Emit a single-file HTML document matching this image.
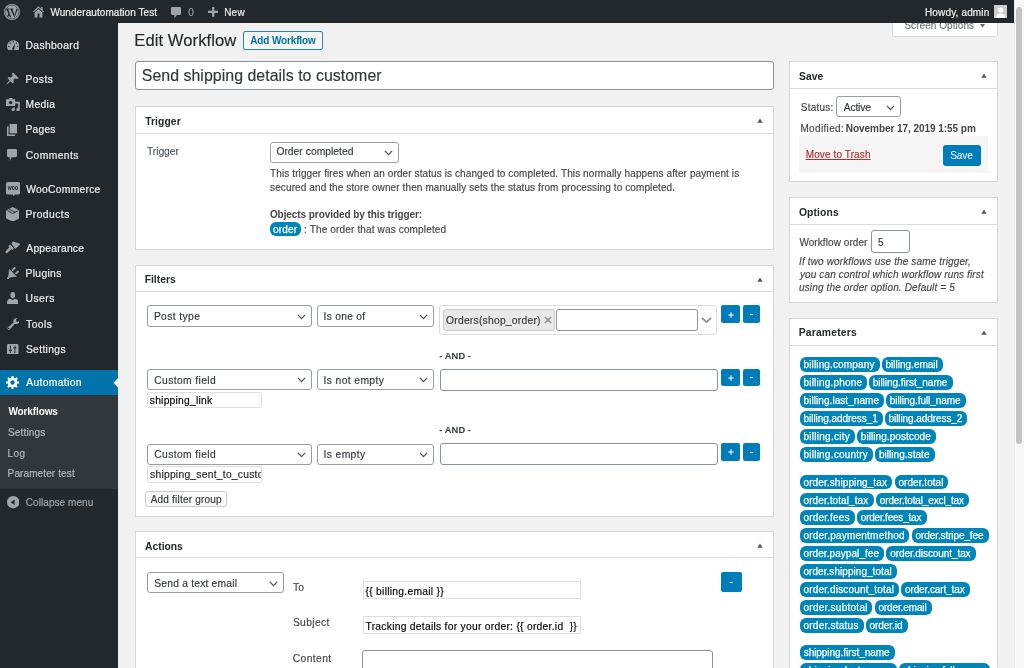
<!DOCTYPE html>
<html><head><meta charset="utf-8">
<style>
*{box-sizing:border-box;margin:0;padding:0}
html,body{width:1024px;height:668px;overflow:hidden;background:#f1f1f1;font-family:"Liberation Sans",sans-serif;color:#444;}
.a{position:absolute}
.t{position:absolute;line-height:1;white-space:nowrap}
#root{position:absolute;left:0;top:0;width:1024px;height:668px;will-change:transform}
.tag{position:absolute;height:14.8px;background:#0085ba;color:#fff;border-radius:6px;font-size:10.1px;line-height:16.2px;padding-left:4px;white-space:nowrap}
svg{position:absolute}
</style></head><body><div id="root">

<div class="a" style="left:892.00px;top:10.00px;width:106.00px;height:27.00px;background:#fff;border:1px solid #d5d8db;border-radius:0 0 3px 3px"></div>
<div class="t" style="left:904.40px;top:21.13px;font-size:10.00px;color:#72777c;letter-spacing:0.052px;-webkit-text-stroke:0.15px #72777c;">Screen Options</div>
<svg width="5" height="3.5" viewBox="0 0 5 3.5" style="left:980.2px;top:24.3px"><path d="M0 0 H5 L2.5 3.5 Z" fill="#666"/></svg>
<div class="a" style="left:0.00px;top:0.00px;width:1014.00px;height:23.40px;background:#23282d"></div>
<div class="t" style="left:50.40px;top:8.24px;font-size:10.00px;color:#eee;letter-spacing:0.072px;-webkit-text-stroke:0.2px #eee;">Wunderautomation Test</div>
<div class="t" style="left:188.30px;top:8.24px;font-size:10.00px;color:#a0a5aa;-webkit-text-stroke:0.15px #a0a5aa;">0</div>
<div class="t" style="left:224.20px;top:8.24px;font-size:10.00px;color:#eee;letter-spacing:0.208px;-webkit-text-stroke:0.2px #eee;">New</div>
<div class="t" style="left:925.00px;top:8.04px;font-size:10.00px;color:#eee;letter-spacing:0.149px;-webkit-text-stroke:0.2px #eee;">Howdy, admin</div>
<div class="a" style="left:0.00px;top:23.40px;width:118.00px;height:645.00px;background:#23282d"></div>
<div class="t" style="left:25.48px;top:40.78px;font-size:10.30px;color:#eee;letter-spacing:0.377px;-webkit-text-stroke:0.2px #eee;">Dashboard</div>
<div class="t" style="left:25.48px;top:74.88px;font-size:10.30px;color:#eee;letter-spacing:0.393px;-webkit-text-stroke:0.2px #eee;">Posts</div>
<div class="t" style="left:25.48px;top:99.98px;font-size:10.30px;color:#eee;letter-spacing:0.358px;-webkit-text-stroke:0.2px #eee;">Media</div>
<div class="t" style="left:25.48px;top:125.18px;font-size:10.30px;color:#eee;letter-spacing:0.207px;-webkit-text-stroke:0.2px #eee;">Pages</div>
<div class="t" style="left:25.79px;top:150.58px;font-size:10.30px;color:#eee;letter-spacing:0.404px;-webkit-text-stroke:0.2px #eee;">Comments</div>
<div class="t" style="left:26.30px;top:184.68px;font-size:10.30px;color:#eee;letter-spacing:0.272px;-webkit-text-stroke:0.2px #eee;">WooCommerce</div>
<div class="t" style="left:25.48px;top:210.18px;font-size:10.30px;color:#eee;letter-spacing:0.455px;-webkit-text-stroke:0.2px #eee;">Products</div>
<div class="t" style="left:26.30px;top:243.68px;font-size:10.30px;color:#eee;letter-spacing:0.236px;-webkit-text-stroke:0.2px #eee;">Appearance</div>
<div class="t" style="left:25.48px;top:269.18px;font-size:10.30px;color:#eee;letter-spacing:0.342px;-webkit-text-stroke:0.2px #eee;">Plugins</div>
<div class="t" style="left:25.58px;top:294.18px;font-size:10.30px;color:#eee;letter-spacing:0.458px;-webkit-text-stroke:0.2px #eee;">Users</div>
<div class="t" style="left:26.09px;top:319.68px;font-size:10.30px;color:#eee;letter-spacing:0.417px;-webkit-text-stroke:0.2px #eee;">Tools</div>
<div class="t" style="left:25.89px;top:345.18px;font-size:10.30px;color:#eee;letter-spacing:0.358px;-webkit-text-stroke:0.2px #eee;">Settings</div>
<div class="a" style="left:0.00px;top:370.00px;width:118.00px;height:25.00px;background:#0073aa"></div>
<div class="t" style="left:26.30px;top:378.08px;font-size:10.30px;color:#fff;letter-spacing:0.342px;-webkit-text-stroke:0.2px #fff;">Automation</div>
<div class="a" style="left:0.00px;top:395.00px;width:118.00px;height:94.30px;background:#32373c"></div>
<div class="t" style="left:8.40px;top:407.04px;font-size:10.00px;color:#fff;letter-spacing:-0.114px;font-weight:bold;">Workflows</div>
<div class="t" style="left:8.00px;top:428.04px;font-size:10.00px;color:#b4b9be;letter-spacing:0.167px;-webkit-text-stroke:0.2px #b4b9be;">Settings</div>
<div class="t" style="left:7.60px;top:448.63px;font-size:10.00px;color:#b4b9be;letter-spacing:0.338px;-webkit-text-stroke:0.2px #b4b9be;">Log</div>
<div class="t" style="left:7.60px;top:469.24px;font-size:10.00px;color:#b4b9be;letter-spacing:0.115px;-webkit-text-stroke:0.2px #b4b9be;">Parameter test</div>
<div class="t" style="left:25.80px;top:498.04px;font-size:10.00px;color:#a0a5aa;letter-spacing:0.063px;-webkit-text-stroke:0.2px #a0a5aa;">Collapse menu</div>
<div class="t" style="left:134.37px;top:32.85px;font-size:16.60px;color:#23282d;letter-spacing:0.061px;-webkit-text-stroke:0.15px #23282d;">Edit Workflow</div>
<div class="a" style="left:243.00px;top:31.00px;width:80.00px;height:19.00px;background:#f3f5f6;border:1px solid #2a86b6;border-radius:2px"></div>
<div class="t" style="left:250.30px;top:36.43px;font-size:10.00px;color:#0071a1;letter-spacing:-0.150px;font-weight:bold;">Add Workflow</div>
<div class="a" style="left:135.00px;top:61.00px;width:639.00px;height:29.00px;background:#fff;border:1px solid #8a9299;border-radius:3px"></div>
<div class="t" style="left:141.76px;top:68.34px;font-size:15.90px;color:#32373c;letter-spacing:0.041px;-webkit-text-stroke:0.15px #32373c;">Send shipping details to customer</div>
<div class="a" style="left:135.00px;top:106.00px;width:639.00px;height:144.00px;background:#fff;border:1px solid #d5d8db"></div>
<div class="a" style="left:136.00px;top:133.00px;width:638.00px;height:1.00px;background:#dadde0"></div>
<div class="t" style="left:145.20px;top:116.98px;font-size:10.30px;color:#23282d;letter-spacing:0.097px;font-weight:bold;">Trigger</div>
<svg width="6" height="5" viewBox="0 0 6 5" style="left:757.0px;top:118.25px"><path d="M0.3 4.8 L3 0.4 L5.7 4.8 Z" fill="#555"/></svg>
<div class="t" style="left:146.99px;top:147.48px;font-size:10.30px;color:#50575e;letter-spacing:-0.067px;-webkit-text-stroke:0.15px #50575e;">Trigger</div>
<div class="a" style="left:270.00px;top:142.00px;width:129.00px;height:21.00px;background:#fff;border:1px solid #979da3;border-radius:3px"></div>
<div class="t" style="left:276.39px;top:147.48px;font-size:10.30px;color:#32373c;letter-spacing:0.027px;-webkit-text-stroke:0.15px #32373c;">Order completed</div>
<svg width="9" height="6" viewBox="0 0 9 6" style="left:383.9px;top:150.0px"><path d="M0.9 0.9 L4.5 4.6 L8.1 0.9" fill="none" stroke="#555" stroke-width="1.35"/></svg>
<div class="t" style="left:270.10px;top:169.34px;font-size:10.00px;color:#444;letter-spacing:0.099px;-webkit-text-stroke:0.15px #444;">This trigger fires when an order status is changed to completed. This normally happens after payment is</div>
<div class="t" style="left:270.10px;top:182.94px;font-size:10.00px;color:#444;letter-spacing:0.107px;-webkit-text-stroke:0.15px #444;">secured and the store owner then manually sets the status from processing to completed.</div>
<div class="t" style="left:269.90px;top:209.63px;font-size:10.00px;color:#444;letter-spacing:-0.070px;font-weight:bold;">Objects provided by this trigger:</div>
<div class="a" style="left:270.00px;top:221.70px;width:31.00px;height:14.20px;background:#0085ba;border-radius:6px"></div>
<div class="t" style="left:273.00px;top:224.74px;font-size:10.00px;color:#fff;letter-spacing:0.196px;-webkit-text-stroke:0.25px #fff;">order</div>
<div class="t" style="left:304.10px;top:225.24px;font-size:10.00px;color:#444;letter-spacing:0.149px;-webkit-text-stroke:0.15px #444;">: The order that was completed</div>
<div class="a" style="left:135.00px;top:265.00px;width:639.00px;height:252.00px;background:#fff;border:1px solid #d5d8db"></div>
<div class="a" style="left:136.00px;top:291.00px;width:638.00px;height:1.00px;background:#dadde0"></div>
<div class="t" style="left:144.68px;top:275.18px;font-size:10.30px;color:#23282d;letter-spacing:0.013px;font-weight:bold;">Filters</div>
<svg width="6" height="5" viewBox="0 0 6 5" style="left:757.0px;top:276.55px"><path d="M0.3 4.8 L3 0.4 L5.7 4.8 Z" fill="#555"/></svg>
<div class="a" style="left:147.00px;top:305.00px;width:165.00px;height:22.00px;background:#fff;border:1px solid #979da3;border-radius:3px"></div>
<div class="t" style="left:153.88px;top:311.98px;font-size:10.30px;color:#32373c;letter-spacing:0.382px;-webkit-text-stroke:0.15px #32373c;">Post type</div>
<svg width="9" height="6" viewBox="0 0 9 6" style="left:296.7px;top:313.9px"><path d="M0.9 0.9 L4.5 4.6 L8.1 0.9" fill="none" stroke="#555" stroke-width="1.35"/></svg>
<div class="a" style="left:317.00px;top:305.00px;width:117.00px;height:22.00px;background:#fff;border:1px solid #979da3;border-radius:3px"></div>
<div class="t" style="left:323.57px;top:311.98px;font-size:10.30px;color:#32373c;letter-spacing:0.249px;-webkit-text-stroke:0.15px #32373c;">Is one of</div>
<svg width="9" height="6" viewBox="0 0 9 6" style="left:419.09999999999997px;top:313.9px"><path d="M0.9 0.9 L4.5 4.6 L8.1 0.9" fill="none" stroke="#555" stroke-width="1.35"/></svg>
<div class="a" style="left:147.00px;top:369.00px;width:165.00px;height:21.00px;background:#fff;border:1px solid #979da3;border-radius:3px"></div>
<div class="t" style="left:154.19px;top:375.88px;font-size:10.30px;color:#32373c;letter-spacing:0.395px;-webkit-text-stroke:0.15px #32373c;">Custom field</div>
<svg width="9" height="6" viewBox="0 0 9 6" style="left:296.7px;top:377.45px"><path d="M0.9 0.9 L4.5 4.6 L8.1 0.9" fill="none" stroke="#555" stroke-width="1.35"/></svg>
<div class="a" style="left:317.00px;top:369.00px;width:117.00px;height:21.00px;background:#fff;border:1px solid #979da3;border-radius:3px"></div>
<div class="t" style="left:323.57px;top:375.88px;font-size:10.30px;color:#32373c;letter-spacing:0.384px;-webkit-text-stroke:0.15px #32373c;">Is not empty</div>
<svg width="9" height="6" viewBox="0 0 9 6" style="left:419.09999999999997px;top:377.45px"><path d="M0.9 0.9 L4.5 4.6 L8.1 0.9" fill="none" stroke="#555" stroke-width="1.35"/></svg>
<div class="a" style="left:147.00px;top:444.00px;width:165.00px;height:21.00px;background:#fff;border:1px solid #979da3;border-radius:3px"></div>
<div class="t" style="left:154.19px;top:450.48px;font-size:10.30px;color:#32373c;letter-spacing:0.395px;-webkit-text-stroke:0.15px #32373c;">Custom field</div>
<svg width="9" height="6" viewBox="0 0 9 6" style="left:296.7px;top:452.1px"><path d="M0.9 0.9 L4.5 4.6 L8.1 0.9" fill="none" stroke="#555" stroke-width="1.35"/></svg>
<div class="a" style="left:317.00px;top:444.00px;width:117.00px;height:21.00px;background:#fff;border:1px solid #979da3;border-radius:3px"></div>
<div class="t" style="left:323.57px;top:450.48px;font-size:10.30px;color:#32373c;letter-spacing:0.372px;-webkit-text-stroke:0.15px #32373c;">Is empty</div>
<svg width="9" height="6" viewBox="0 0 9 6" style="left:419.09999999999997px;top:452.1px"><path d="M0.9 0.9 L4.5 4.6 L8.1 0.9" fill="none" stroke="#555" stroke-width="1.35"/></svg>
<div class="a" style="left:439.00px;top:305.00px;width:278.00px;height:30.00px;background:#fff;border:1px solid #dcdcde;border-radius:3px"></div>
<div class="a" style="left:443.00px;top:309.00px;width:112.00px;height:22.00px;background:#e8e8e8;border:1px solid #ccc;border-radius:3px"></div>
<div class="t" style="left:445.99px;top:316.18px;font-size:10.30px;color:#32373c;letter-spacing:0.242px;-webkit-text-stroke:0.15px #32373c;">Orders(shop_order)</div>
<svg width="8" height="8" viewBox="0 0 8 8" style="left:543.5px;top:316px"><path d="M1 1 L7 7 M7 1 L1 7" stroke="#888" stroke-width="1.5"/></svg>
<div class="a" style="left:556.00px;top:309.00px;width:142.00px;height:22.00px;background:#fff;border:1px solid #8a9299;border-radius:3px"></div>
<svg width="11" height="6.5" viewBox="0 0 11 6.5" style="left:700.5px;top:317px"><path d="M0.9 0.9 L5.5 5.1 L10.1 0.9" fill="none" stroke="#888" stroke-width="1.6"/></svg>
<div class="a" style="left:440.00px;top:369.00px;width:278.00px;height:22.00px;background:#fff;border:1px solid #8a9299;border-radius:3px"></div>
<div class="a" style="left:440.00px;top:443.00px;width:278.00px;height:22.00px;background:#fff;border:1px solid #8a9299;border-radius:3px"></div>
<div class="a" style="left:721.20px;top:305.30px;width:18.40px;height:17.60px;background:#007cba;border-radius:2px"></div>
<div class="a" style="left:743.00px;top:305.30px;width:17.40px;height:17.60px;background:#007cba;border-radius:2px"></div>
<svg width="6" height="6" viewBox="0 0 6 6" style="left:727.6px;top:311.5px"><path d="M3 0.3 V5.7 M0.3 3 H5.7" stroke="#fff" stroke-width="1.1"/></svg>
<div class="a" style="left:749.80px;top:313.90px;width:3.60px;height:1.10px;background:#fff"></div>
<div class="a" style="left:721.20px;top:368.50px;width:18.40px;height:17.60px;background:#007cba;border-radius:2px"></div>
<div class="a" style="left:743.00px;top:368.50px;width:17.40px;height:17.60px;background:#007cba;border-radius:2px"></div>
<svg width="6" height="6" viewBox="0 0 6 6" style="left:727.6px;top:374.7px"><path d="M3 0.3 V5.7 M0.3 3 H5.7" stroke="#fff" stroke-width="1.1"/></svg>
<div class="a" style="left:749.80px;top:377.10px;width:3.60px;height:1.10px;background:#fff"></div>
<div class="a" style="left:721.20px;top:443.00px;width:18.40px;height:17.60px;background:#007cba;border-radius:2px"></div>
<div class="a" style="left:743.00px;top:443.00px;width:17.40px;height:17.60px;background:#007cba;border-radius:2px"></div>
<svg width="6" height="6" viewBox="0 0 6 6" style="left:727.6px;top:449.2px"><path d="M3 0.3 V5.7 M0.3 3 H5.7" stroke="#fff" stroke-width="1.1"/></svg>
<div class="a" style="left:749.80px;top:451.60px;width:3.60px;height:1.10px;background:#fff"></div>
<div class="t" style="left:439.32px;top:351.63px;font-size:9.30px;color:#32373c;letter-spacing:0.079px;font-weight:bold;">- AND -</div>
<div class="t" style="left:439.32px;top:426.23px;font-size:9.30px;color:#32373c;letter-spacing:0.079px;font-weight:bold;">- AND -</div>
<div class="a" style="left:147.00px;top:392.00px;width:115.00px;height:16.00px;background:#fff;border:1px solid #ddd;border-radius:2px"></div>
<div class="t" style="left:149.79px;top:396.08px;font-size:10.30px;color:#000;letter-spacing:0.229px;-webkit-text-stroke:0.15px #000;">shipping_link</div>
<div class="a" style="left:147px;top:466px;width:115px;height:17px;background:#fff;border:1px solid #ddd;border-radius:2px;overflow:hidden">
<div class="t" style="left:2.0px;top:2.9px;font-size:10.3px;letter-spacing:0.25px;color:#1e1e1e;-webkit-text-stroke:0.15px #1e1e1e">shipping_sent_to_customer</div></div>
<div class="a" style="left:145.00px;top:491.00px;width:82.00px;height:16.00px;background:#fafafa;border:1px solid #ccc;border-radius:3px"></div>
<div class="t" style="left:150.70px;top:495.04px;font-size:10.00px;color:#32373c;letter-spacing:0.210px;-webkit-text-stroke:0.15px #32373c;">Add filter group</div>
<div class="a" style="left:135.00px;top:531.00px;width:639.00px;height:170.00px;background:#fff;border:1px solid #d5d8db"></div>
<div class="a" style="left:136.00px;top:557.00px;width:638.00px;height:1.00px;background:#dadde0"></div>
<div class="t" style="left:145.09px;top:541.58px;font-size:10.30px;color:#23282d;font-weight:bold;">Actions</div>
<svg width="6" height="5" viewBox="0 0 6 5" style="left:757.0px;top:543.0px"><path d="M0.3 4.8 L3 0.4 L5.7 4.8 Z" fill="#555"/></svg>
<div class="a" style="left:147.00px;top:572.00px;width:137.00px;height:21.00px;background:#fff;border:1px solid #979da3;border-radius:3px"></div>
<div class="t" style="left:154.29px;top:579.38px;font-size:10.30px;color:#32373c;letter-spacing:0.198px;-webkit-text-stroke:0.15px #32373c;">Send a text email</div>
<svg width="9" height="6" viewBox="0 0 9 6" style="left:268.7px;top:580.8px"><path d="M0.9 0.9 L4.5 4.6 L8.1 0.9" fill="none" stroke="#555" stroke-width="1.35"/></svg>
<div class="t" style="left:293.09px;top:583.38px;font-size:10.30px;color:#444;-webkit-text-stroke:0.15px #444;">To</div>
<div class="t" style="left:292.89px;top:618.18px;font-size:10.30px;color:#444;letter-spacing:0.356px;-webkit-text-stroke:0.15px #444;">Subject</div>
<div class="t" style="left:292.79px;top:653.58px;font-size:10.30px;color:#444;letter-spacing:0.386px;-webkit-text-stroke:0.15px #444;">Content</div>
<div class="a" style="left:363.00px;top:581.00px;width:218.00px;height:18.00px;background:#fff;border:1px solid #ddd"></div>
<div class="t" style="left:365.60px;top:586.88px;font-size:10.30px;color:#000;letter-spacing:0.264px;-webkit-text-stroke:0.15px #000;">{{ billing.email }}</div>
<div class="a" style="left:363.00px;top:616.00px;width:218.00px;height:18.00px;background:#fff;border:1px solid #ddd"></div>
<div class="t" style="left:365.49px;top:621.68px;font-size:10.30px;color:#000;letter-spacing:0.266px;-webkit-text-stroke:0.15px #000;">Tracking details for your order: {{ order.id&nbsp; }}</div>
<div class="a" style="left:362.00px;top:650.00px;width:351.00px;height:41.00px;background:#fff;border:1px solid #8a9299;border-radius:3px"></div>
<div class="a" style="left:721.00px;top:571.70px;width:21.10px;height:20.80px;background:#007cba;border-radius:2px"></div>
<div class="a" style="left:729.80px;top:581.60px;width:3.60px;height:1.10px;background:#fff"></div>
<div class="a" style="left:789.00px;top:61.00px;width:209.00px;height:121.00px;background:#fff;border:1px solid #d5d8db"></div>
<div class="a" style="left:790.00px;top:88.00px;width:208.00px;height:1.00px;background:#dadde0"></div>
<div class="t" style="left:799.09px;top:71.58px;font-size:10.30px;color:#23282d;letter-spacing:0.040px;font-weight:bold;">Save</div>
<svg width="6" height="5" viewBox="0 0 6 5" style="left:981px;top:73.05px"><path d="M0.3 4.8 L3 0.4 L5.7 4.8 Z" fill="#555"/></svg>
<div class="t" style="left:800.80px;top:103.23px;font-size:10.00px;color:#444;letter-spacing:0.242px;-webkit-text-stroke:0.15px #444;">Status:</div>
<div class="a" style="left:836.00px;top:96.00px;width:65.00px;height:21.00px;background:#fff;border:1px solid #979da3;border-radius:3px"></div>
<div class="t" style="left:843.70px;top:102.98px;font-size:10.30px;color:#32373c;letter-spacing:-0.155px;-webkit-text-stroke:0.15px #32373c;">Active</div>
<svg width="9" height="6" viewBox="0 0 9 6" style="left:885.9px;top:104.55px"><path d="M0.9 0.9 L4.5 4.6 L8.1 0.9" fill="none" stroke="#555" stroke-width="1.35"/></svg>
<div class="t" style="left:800.40px;top:123.63px;font-size:10.00px;color:#444;letter-spacing:0.350px;-webkit-text-stroke:0.15px #444;">Modified:</div>
<div class="t" style="left:845.80px;top:123.63px;font-size:10.00px;color:#444;letter-spacing:-0.050px;font-weight:bold;">November 17, 2019 1:55 pm</div>
<div class="a" style="left:798.90px;top:136.30px;width:189.30px;height:36.40px;background:#f5f5f5"></div>
<div class="t" style="left:805.70px;top:150.13px;font-size:10.00px;color:#b32d2e;letter-spacing:0.118px;text-decoration:underline;-webkit-text-stroke:0.15px #b32d2e">Move to Trash</div>
<div class="a" style="left:942.70px;top:144.70px;width:38.20px;height:20.90px;background:#007cba;border-radius:3px"></div>
<div class="t" style="left:950.19px;top:150.97px;font-size:10.20px;color:#fff;letter-spacing:-0.2px">Save</div>
<div class="a" style="left:789.00px;top:197.00px;width:209.00px;height:106.00px;background:#fff;border:1px solid #d5d8db"></div>
<div class="a" style="left:790.00px;top:224.00px;width:208.00px;height:1.00px;background:#dadde0"></div>
<div class="t" style="left:798.89px;top:207.78px;font-size:10.30px;color:#23282d;letter-spacing:0.146px;font-weight:bold;">Options</div>
<svg width="6" height="5" viewBox="0 0 6 5" style="left:981px;top:209.25px"><path d="M0.3 4.8 L3 0.4 L5.7 4.8 Z" fill="#555"/></svg>
<div class="t" style="left:799.40px;top:238.03px;font-size:10.00px;color:#444;letter-spacing:0.075px;-webkit-text-stroke:0.15px #444;">Workflow order</div>
<div class="a" style="left:871.00px;top:230.00px;width:39.00px;height:23.00px;background:#fff;border:1px solid #8a9299;border-radius:3px"></div>
<div class="t" style="left:878.00px;top:238.03px;font-size:10.00px;color:#32373c;-webkit-text-stroke:0.15px #32373c;">5</div>
<div class="t" style="left:799.10px;top:256.63px;font-size:10.00px;color:#444;letter-spacing:0.134px;font-style:italic;-webkit-text-stroke:0.15px #444;">If two workflows use the same trigger,</div>
<div class="t" style="left:800.00px;top:269.74px;font-size:10.00px;color:#444;letter-spacing:0.118px;font-style:italic;-webkit-text-stroke:0.15px #444;">you can control which workflow runs first</div>
<div class="t" style="left:799.00px;top:282.94px;font-size:10.00px;color:#444;letter-spacing:0.142px;font-style:italic;-webkit-text-stroke:0.15px #444;">using the order option. Default = 5</div>
<div class="a" style="left:789.00px;top:318.00px;width:209.00px;height:383.00px;background:#fff;border:1px solid #d5d8db"></div>
<div class="a" style="left:790.00px;top:345.00px;width:208.00px;height:1.00px;background:#dadde0"></div>
<div class="t" style="left:798.68px;top:328.18px;font-size:10.30px;color:#23282d;letter-spacing:0.208px;font-weight:bold;">Parameters</div>
<svg width="6" height="5" viewBox="0 0 6 5" style="left:981px;top:330.25px"><path d="M0.3 4.8 L3 0.4 L5.7 4.8 Z" fill="#555"/></svg>
<div class="a" style="left:799.80px;top:357.20px;width:80.20px;height:14.80px;background:#0085ba;border-radius:6px"></div>
<div class="t" style="left:803.50px;top:360.24px;font-size:10.00px;color:#fff;letter-spacing:0.141px;-webkit-text-stroke:0.25px #fff;">billing.company</div>
<div class="a" style="left:881.80px;top:357.20px;width:61.00px;height:14.80px;background:#0085ba;border-radius:6px"></div>
<div class="t" style="left:885.50px;top:360.24px;font-size:10.00px;color:#fff;letter-spacing:0.006px;-webkit-text-stroke:0.25px #fff;">billing.email</div>
<div class="a" style="left:799.80px;top:375.00px;width:67.50px;height:14.80px;background:#0085ba;border-radius:6px"></div>
<div class="t" style="left:803.50px;top:378.04px;font-size:10.00px;color:#fff;letter-spacing:0.200px;-webkit-text-stroke:0.25px #fff;">billing.phone</div>
<div class="a" style="left:869.00px;top:375.00px;width:83.50px;height:14.80px;background:#0085ba;border-radius:6px"></div>
<div class="t" style="left:872.70px;top:378.04px;font-size:10.00px;color:#fff;letter-spacing:-0.028px;-webkit-text-stroke:0.25px #fff;">billing.first_name</div>
<div class="a" style="left:799.80px;top:393.00px;width:84.50px;height:14.80px;background:#0085ba;border-radius:6px"></div>
<div class="t" style="left:803.50px;top:396.04px;font-size:10.00px;color:#fff;letter-spacing:0.067px;-webkit-text-stroke:0.25px #fff;">billing.last_name</div>
<div class="a" style="left:886.10px;top:393.00px;width:79.70px;height:14.80px;background:#0085ba;border-radius:6px"></div>
<div class="t" style="left:889.80px;top:396.04px;font-size:10.00px;color:#fff;letter-spacing:-0.059px;-webkit-text-stroke:0.25px #fff;">billing.full_name</div>
<div class="a" style="left:799.80px;top:411.00px;width:83.20px;height:14.80px;background:#0085ba;border-radius:6px"></div>
<div class="t" style="left:803.50px;top:414.04px;font-size:10.00px;color:#fff;letter-spacing:-0.043px;-webkit-text-stroke:0.25px #fff;">billing.address_1</div>
<div class="a" style="left:884.80px;top:411.00px;width:82.70px;height:14.80px;background:#0085ba;border-radius:6px"></div>
<div class="t" style="left:888.50px;top:414.04px;font-size:10.00px;color:#fff;letter-spacing:-0.074px;-webkit-text-stroke:0.25px #fff;">billing.address_2</div>
<div class="a" style="left:799.80px;top:428.80px;width:55.50px;height:14.80px;background:#0085ba;border-radius:6px"></div>
<div class="t" style="left:803.50px;top:431.84px;font-size:10.00px;color:#fff;letter-spacing:0.259px;-webkit-text-stroke:0.25px #fff;">billing.city</div>
<div class="a" style="left:857.10px;top:428.80px;width:78.90px;height:14.80px;background:#0085ba;border-radius:6px"></div>
<div class="t" style="left:860.80px;top:431.84px;font-size:10.00px;color:#fff;letter-spacing:0.068px;-webkit-text-stroke:0.25px #fff;">billing.postcode</div>
<div class="a" style="left:799.80px;top:446.80px;width:73.60px;height:14.80px;background:#0085ba;border-radius:6px"></div>
<div class="t" style="left:803.50px;top:449.84px;font-size:10.00px;color:#fff;letter-spacing:0.226px;-webkit-text-stroke:0.25px #fff;">billing.country</div>
<div class="a" style="left:875.20px;top:446.80px;width:59.50px;height:14.80px;background:#0085ba;border-radius:6px"></div>
<div class="t" style="left:878.90px;top:449.84px;font-size:10.00px;color:#fff;letter-spacing:0.044px;-webkit-text-stroke:0.25px #fff;">billing.state</div>
<div class="a" style="left:799.60px;top:474.60px;width:92.80px;height:14.80px;background:#0085ba;border-radius:6px"></div>
<div class="t" style="left:803.50px;top:477.64px;font-size:10.00px;color:#fff;letter-spacing:0.099px;-webkit-text-stroke:0.25px #fff;">order.shipping_tax</div>
<div class="a" style="left:894.50px;top:474.60px;width:53.90px;height:14.80px;background:#0085ba;border-radius:6px"></div>
<div class="t" style="left:898.40px;top:477.64px;font-size:10.00px;color:#fff;letter-spacing:0.055px;-webkit-text-stroke:0.25px #fff;">order.total</div>
<div class="a" style="left:799.60px;top:492.50px;width:74.10px;height:14.80px;background:#0085ba;border-radius:6px"></div>
<div class="t" style="left:803.50px;top:495.54px;font-size:10.00px;color:#fff;letter-spacing:0.095px;-webkit-text-stroke:0.25px #fff;">order.total_tax</div>
<div class="a" style="left:875.90px;top:492.50px;width:93.60px;height:14.80px;background:#0085ba;border-radius:6px"></div>
<div class="t" style="left:879.80px;top:495.54px;font-size:10.00px;color:#fff;letter-spacing:-0.133px;-webkit-text-stroke:0.25px #fff;">order.total_excl_tax</div>
<div class="a" style="left:799.60px;top:510.40px;width:55.10px;height:14.80px;background:#0085ba;border-radius:6px"></div>
<div class="t" style="left:803.50px;top:513.43px;font-size:10.00px;color:#fff;letter-spacing:0.159px;-webkit-text-stroke:0.25px #fff;">order.fees</div>
<div class="a" style="left:856.90px;top:510.40px;width:70.00px;height:14.80px;background:#0085ba;border-radius:6px"></div>
<div class="t" style="left:860.80px;top:513.43px;font-size:10.00px;color:#fff;letter-spacing:-0.213px;-webkit-text-stroke:0.25px #fff;">order.fees_tax</div>
<div class="a" style="left:799.60px;top:528.30px;width:109.90px;height:14.80px;background:#0085ba;border-radius:6px"></div>
<div class="t" style="left:803.50px;top:531.33px;font-size:10.00px;color:#fff;letter-spacing:0.205px;-webkit-text-stroke:0.25px #fff;">order.paymentmethod</div>
<div class="a" style="left:911.70px;top:528.30px;width:77.10px;height:14.80px;background:#0085ba;border-radius:6px"></div>
<div class="t" style="left:915.60px;top:531.33px;font-size:10.00px;color:#fff;letter-spacing:-0.102px;-webkit-text-stroke:0.25px #fff;">order.stripe_fee</div>
<div class="a" style="left:799.60px;top:546.20px;width:84.70px;height:14.80px;background:#0085ba;border-radius:6px"></div>
<div class="t" style="left:803.50px;top:549.24px;font-size:10.00px;color:#fff;letter-spacing:0.071px;-webkit-text-stroke:0.25px #fff;">order.paypal_fee</div>
<div class="a" style="left:886.40px;top:546.20px;width:89.70px;height:14.80px;background:#0085ba;border-radius:6px"></div>
<div class="t" style="left:890.30px;top:549.24px;font-size:10.00px;color:#fff;letter-spacing:-0.083px;-webkit-text-stroke:0.25px #fff;">order.discount_tax</div>
<div class="a" style="left:799.60px;top:564.10px;width:97.10px;height:14.80px;background:#0085ba;border-radius:6px"></div>
<div class="t" style="left:803.50px;top:567.13px;font-size:10.00px;color:#fff;letter-spacing:0.049px;-webkit-text-stroke:0.25px #fff;">order.shipping_total</div>
<div class="a" style="left:799.60px;top:582.00px;width:99.30px;height:14.80px;background:#0085ba;border-radius:6px"></div>
<div class="t" style="left:803.50px;top:585.03px;font-size:10.00px;color:#fff;letter-spacing:0.165px;-webkit-text-stroke:0.25px #fff;">order.discount_total</div>
<div class="a" style="left:901.10px;top:582.00px;width:69.10px;height:14.80px;background:#0085ba;border-radius:6px"></div>
<div class="t" style="left:905.00px;top:585.03px;font-size:10.00px;color:#fff;letter-spacing:-0.111px;-webkit-text-stroke:0.25px #fff;">order.cart_tax</div>
<div class="a" style="left:799.60px;top:600.00px;width:72.80px;height:14.80px;background:#0085ba;border-radius:6px"></div>
<div class="t" style="left:803.50px;top:603.03px;font-size:10.00px;color:#fff;letter-spacing:0.256px;-webkit-text-stroke:0.25px #fff;">order.subtotal</div>
<div class="a" style="left:874.60px;top:600.00px;width:57.00px;height:14.80px;background:#0085ba;border-radius:6px"></div>
<div class="t" style="left:878.50px;top:603.03px;font-size:10.00px;color:#fff;letter-spacing:-0.135px;-webkit-text-stroke:0.25px #fff;">order.email</div>
<div class="a" style="left:799.60px;top:617.90px;width:64.10px;height:14.80px;background:#0085ba;border-radius:6px"></div>
<div class="t" style="left:803.50px;top:620.93px;font-size:10.00px;color:#fff;letter-spacing:0.241px;-webkit-text-stroke:0.25px #fff;">order.status</div>
<div class="a" style="left:865.60px;top:617.90px;width:42.00px;height:14.80px;background:#0085ba;border-radius:6px"></div>
<div class="t" style="left:869.50px;top:620.93px;font-size:10.00px;color:#fff;letter-spacing:-0.042px;-webkit-text-stroke:0.25px #fff;">order.id</div>
<div class="a" style="left:799.60px;top:645.20px;width:95.20px;height:14.80px;background:#0085ba;border-radius:6px"></div>
<div class="t" style="left:803.70px;top:648.24px;font-size:10.00px;color:#fff;letter-spacing:-0.047px;-webkit-text-stroke:0.25px #fff;">shipping.first_name</div>
<div class="a" style="left:799.60px;top:663.10px;width:97.40px;height:14.80px;background:#0085ba;border-radius:6px"></div>
<div class="t" style="left:803.70px;top:666.13px;font-size:10.00px;color:#fff;letter-spacing:0.111px;-webkit-text-stroke:0.25px #fff;">shipping.last_name</div>
<div class="a" style="left:899.00px;top:663.10px;width:91.00px;height:14.80px;background:#0085ba;border-radius:6px"></div>
<div class="t" style="left:903.10px;top:666.13px;font-size:10.00px;color:#fff;letter-spacing:-0.102px;-webkit-text-stroke:0.25px #fff;">shipping.full_name</div>
<svg style="left:3.95px;top:3.95px" width="16" height="16" viewBox="0 0 16 16"><circle cx="8" cy="8" r="8" fill="#a0a5aa"/><circle cx="8" cy="8" r="6.8" fill="none" stroke="#23282d" stroke-width="0.55"/><path d="M2.1 4.9 H4.3 L7.0 12.9 L6.0 13.6 Z M6.3 4.9 H8.4 L11.0 12.9 L10.1 13.6 Z M12.6 4.6 L13.8 5.2 L11.2 11.9 L10.6 10.6 Z M1.4 4.5 H5.2 V5.3 H1.4 Z M5.6 4.5 H9.4 V5.3 H5.6 Z M3.3 12.2 L5.0 8.1 L5.5 9.4 L4.3 12.7 Z" fill="#23282d"/></svg>
<svg style="left:32.5px;top:6.4px" width="11" height="11.5" viewBox="0 0 11 11.5"><path d="M0 5.6 L5.5 0.2 L8.2 2.8 V1 H9.6 V4.2 L11 5.6 L10.2 6.3 L5.5 1.8 L0.8 6.3 Z" fill="#a0a5aa"/><path d="M1.6 6.6 L5.5 2.9 L9.4 6.6 V11.5 H6.5 V7.6 H4.5 V11.5 H1.6 Z" fill="#a0a5aa"/></svg>
<svg style="left:170.9px;top:6.7px" width="10.2" height="11.3" viewBox="0 0 10.2 11.3"><path d="M1.5 0 H8.7 Q10.2 0 10.2 1.5 V6.4 Q10.2 7.9 8.7 7.9 H6 L3.4 11.2 L3.4 7.9 H1.5 Q0 7.9 0 6.4 V1.5 Q0 0 1.5 0 Z" fill="#a0a5aa"/></svg>
<svg style="left:207.9px;top:7.2px" width="10.4" height="9.8" viewBox="0 0 10.4 9.8"><rect x="4.05" y="0" width="2.3" height="9.8" fill="#a0a5aa"/><rect x="0" y="3.75" width="10.4" height="2.3" fill="#a0a5aa"/></svg>
<svg style="left:993.5px;top:5.4px" width="13.2" height="13" viewBox="0 0 13.2 13"><rect width="13.2" height="13" fill="#cdcdcd"/><circle cx="6.6" cy="5" r="2.6" fill="#fff"/><path d="M1.8 13 Q2 8.6 6.6 8.6 Q11.2 8.6 11.4 13 Z" fill="#fff"/></svg>
<svg style="left:6.5px;top:40px" width="12.6" height="10.2" viewBox="0 0 12.6 10.2"><path d="M1.2 10.2 A6.3 6.3 0 1 1 11.4 10.2 Z" fill="#a0a5aa"/><circle cx="6.3" cy="1.8" r="0.75" fill="#23282d"/><circle cx="3.2" cy="3.2" r="0.75" fill="#23282d"/><circle cx="9.4" cy="3.2" r="0.75" fill="#23282d"/><circle cx="2" cy="6.5" r="0.75" fill="#23282d"/><circle cx="10.6" cy="6.5" r="0.75" fill="#23282d"/><path d="M5.2 8.6 L8.0 3.6 L7.3 9.2 Z" fill="#23282d"/><circle cx="6.2" cy="8.8" r="1.1" fill="#23282d"/></svg>
<svg style="left:6.1px;top:72.3px" width="13" height="12.7" viewBox="0 0 13 12.7"><path d="M7 0.4 L12.7 6 L11.2 7.1 L8.9 6.4 L7.2 8.1 L8 10.3 L6.7 11.3 L4.6 9.2 L0.8 12.6 L0.3 12.2 L3.7 8.3 L1.6 6.2 L2.6 4.9 L4.9 5.6 L6.6 3.9 L5.9 1.6 Z" fill="#a0a5aa"/></svg>
<svg style="left:5.75px;top:97.8px" width="14" height="13.2" viewBox="0 0 14 13.2"><path d="M0 1.2 H2.6 L3.4 0 H6.1 L6.9 1.2 H9.2 V8.1 H0 Z" fill="#a0a5aa"/><circle cx="4.6" cy="4.6" r="1.7" fill="#23282d"/><path d="M8.6 3.7 H13.8 V11.3 Q13.8 13.1 12 13.1 Q10.3 13.1 10.3 11.6 Q10.3 10.1 12.2 10.1 V5.6 H8.6 Z" fill="#a0a5aa"/><path d="M8.8 8.9 V11.6 Q8.8 13.1 7.1 13.1 Q5.4 13.1 5.4 11.6 Q5.4 10.2 7 10 Z" fill="#a0a5aa"/></svg>
<svg style="left:7.2px;top:123.7px" width="10" height="12.2" viewBox="0 0 10 12.2"><rect x="2.6" y="0" width="7.4" height="9.4" fill="#a0a5aa"/><path d="M0 2.4 H1.6 V10.4 H8 V12.2 H0 Z" fill="#a0a5aa"/></svg>
<svg style="left:7.2px;top:149.1px" width="10" height="12" viewBox="0 0 10 12"><path d="M1.4 0 H8.6 Q10 0 10 1.4 V6.8 Q10 8.2 8.6 8.2 H4.6 L2.8 12 L2.8 8.2 H1.4 Q0 8.2 0 6.8 V1.4 Q0 0 1.4 0 Z" fill="#a0a5aa"/></svg>
<svg style="left:5.7px;top:181.6px" width="14.1" height="14.6" viewBox="0 0 14.1 14.6"><path d="M1.8 0 H12.3 Q14.1 0 14.1 1.8 V10.8 Q14.1 12.6 12.3 12.6 H8.8 L7.8 14.5 L6.9 12.6 H1.8 Q0 12.6 0 10.8 V1.8 Q0 0 1.8 0 Z" fill="#a0a5aa"/><text x="1.8" y="8.3" textLength="10.3" lengthAdjust="spacingAndGlyphs" font-family="Liberation Sans" font-weight="bold" font-size="7.4" fill="#23282d">woo</text></svg>
<svg style="left:6.1px;top:206.5px" width="13.4" height="14.8" viewBox="0 0 13.4 14.8"><path d="M6.7 0 L13.4 3.4 V11.2 L6.7 14.8 L0 11.2 V3.4 Z" fill="#a0a5aa"/><path d="M1.2 3.6 L6.7 6.6 L12.2 3.6 M3.2 2.3 L9.4 5.4" fill="none" stroke="#23282d" stroke-width="0.9"/></svg>
<svg style="left:0px;top:236px" width="24" height="20" viewBox="0 0 24 20"><path d="M6.7 251.9 L10.6 248.0" transform="translate(0,-236)" stroke="#a0a5aa" stroke-width="2.5" stroke-linecap="round"/><path d="M14.0 248.4 L10.1 244.5 L8.4 246.2 L12.3 250.1 Z" transform="translate(0,-236)" fill="#a0a5aa"/><path d="M11.4 243.2 L13.0 241.6 L19.6 243.6 L20.0 244.4 L15.6 248.8 L14.8 248.5 Z" transform="translate(0,-236)" fill="#a0a5aa"/></svg>
<svg style="left:6.8px;top:266.9px" width="12.5" height="12.5" viewBox="0 0 12.5 12.5"><path d="M2.4 2.4 L9.4 9.4 L1.6 10.3 Z" fill="#a0a5aa" stroke="#a0a5aa" stroke-width="0.6" stroke-linejoin="round"/><path d="M2.2 9.6 L0.9 11.2 M5.7 3.0 L7.7 1.0 M9.0 6.3 L11.2 4.5" stroke="#a0a5aa" stroke-width="1.8" stroke-linecap="round"/></svg>
<svg style="left:6.8px;top:292px" width="11.6" height="12.2" viewBox="0 0 11.6 12.2"><ellipse cx="5.8" cy="3.1" rx="2.4" ry="3.1" fill="#a0a5aa"/><path d="M0 12.2 V10.4 Q0 7.2 3.6 6.8 L5.8 8 L8 6.8 Q11.6 7.2 11.6 10.4 V12.2 Z" fill="#a0a5aa"/></svg>
<svg style="left:6.5px;top:317.5px" width="12.6" height="12.3" viewBox="0 0 12.6 12.3"><path d="M8.6 0.2 Q6.4 0.6 6.2 3 Q6.2 4 6.6 4.5 L0.9 9.6 Q0 10.6 0.9 11.5 Q1.8 12.4 2.8 11.4 L7.9 5.8 Q8.8 6.3 10 6 Q12.4 5.3 12.6 3 L10.8 3.9 L9.2 3.2 L9 1.6 L10.6 0.6 Q9.8 0 8.6 0.2 Z" fill="#a0a5aa"/><circle cx="1.9" cy="10.5" r="0.7" fill="#23282d"/></svg>
<svg style="left:7.3px;top:343.7px" width="11.5" height="10.3" viewBox="0 0 11.5 10.3"><rect width="11.5" height="10.3" rx="1" fill="#a0a5aa"/><path d="M3.4 1.5 V9 M7.9 1.5 V9" stroke="#23282d" stroke-width="0.9"/><rect x="2.1" y="5.7" width="2.6" height="1.2" fill="#23282d"/><rect x="6.6" y="3.2" width="2.6" height="1.2" fill="#23282d"/></svg>
<svg style="left:6px;top:376.2px" width="13" height="13" viewBox="0 0 13 13"><path d="M5.6 0 H7.4 L7.7 1.7 Q8.5 1.9 9.1 2.3 L10.5 1.3 L11.8 2.6 L10.8 4 Q11.2 4.7 11.3 5.4 L13 5.6 V7.4 L11.3 7.7 Q11.1 8.4 10.7 9.1 L11.7 10.5 L10.4 11.8 L9 10.8 Q8.4 11.2 7.6 11.3 L7.4 13 H5.6 L5.3 11.3 Q4.6 11.1 3.9 10.7 L2.5 11.7 L1.2 10.4 L2.2 9 Q1.8 8.4 1.7 7.6 L0 7.4 V5.6 L1.7 5.3 Q1.9 4.6 2.3 3.9 L1.3 2.5 L2.6 1.2 L4 2.2 Q4.6 1.8 5.3 1.7 Z" fill="#fff"/><circle cx="6.5" cy="6.5" r="2.2" fill="#0073aa"/></svg>
<svg style="left:6.6px;top:496.3px" width="12.4" height="12.4" viewBox="0 0 12.4 12.4"><circle cx="6.2" cy="6.2" r="6.2" fill="#a0a5aa"/><path d="M3.6 6.2 L7.6 3.4 V9 Z" fill="#23282d"/></svg>
<svg style="left:112.5px;top:376.5px" width="6" height="11.5" viewBox="0 0 6 11.5"><path d="M6 0 L0.5 5.75 L6 11.5 Z" fill="#f1f1f1"/></svg>
<div class="a" style="left:1013.50px;top:0.00px;width:10.50px;height:668.00px;background:#f8f8f8;border-left:1px solid #ececec"></div>
<div class="a" style="left:1016.00px;top:7.00px;width:6.00px;height:437.00px;background:#c2c2c2;border-radius:3px"></div>
</div></body></html>
